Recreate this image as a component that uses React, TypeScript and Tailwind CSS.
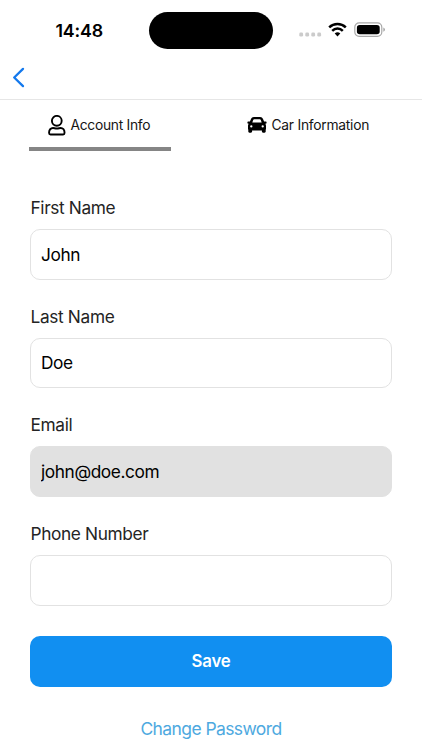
import { useState } from 'react'

type Field = { label: string; value: string; spacing: string; readOnly?: boolean }

const FIELDS: Field[] = [
  { label: 'First Name',   value: 'John',         spacing: 'tracking-[-0.37px]' },
  { label: 'Last Name',    value: 'Doe',          spacing: 'tracking-[-0.35px]' },
  { label: 'Email',        value: 'john@doe.com', spacing: 'tracking-[-0.35px]', readOnly: true },
  { label: 'Phone Number', value: '',             spacing: 'tracking-[-0.37px]' },
]

function UserIcon() {
  return (
    <svg className="shrink-0" width="18" height="21" viewBox="0 0 18 21" fill="none" stroke="#000" strokeWidth="1.9">
      <circle cx="8.8" cy="5.8" r="4.9" />
      <path d="M1.1 18v-.7c0-2.4 1.6-4.3 3.9-4.3 1.3 0 2 .5 3.8.5s2.5-.5 3.8-.5c2.3 0 3.9 1.900 3.900 4.300v.7c0 .9-.6 1.500-1.400 1.500H2.500c-.8 0-1.400-.6-1.400-1.500z" />
    </svg>
  )
}

function CarIcon() {
  return (
    <svg className="shrink-0" width="20" height="16" viewBox="0 0 20 16">
      <path d="M6.900 0h6.200c1.400 0 2.400.8 2.900 2l1.100 2.600h1.700c.6 0 .9.4.8.9l-.2.700c-.1.4-.4.600-.9.600h-.4c.6.500.9 1.100.9 1.900v3c0 .4-.1.800-.3 1.100v1.800c0 .600-.5 1.100-1.100 1.100H16c-.6 0-1.100-.5-1.100-1.100v-1.200h-9.800v1.200c0 .600-.5 1.100-1.100 1.100H2.400c-.6 0-1.100-.5-1.100-1.100v-1.800c-.2-.3-.3-.7-.3-1.100v-3c0-.8.3-1.400.9-1.900h-.4c-.5 0-.8-.2-.9-.6l-.2-.7c-.1-.5.2-.9.8-.9h1.700L4 2C4.500.8 5.500 0 6.900 0z" />
      <path d="M7.200 2.300h5.600c.5 0 .8.200 1 .7l.9 2.400H5.300L6.200 3c.2-.5.500-.7 1-.7z" fill="#fff" />
      <circle cx="4.300" cy="9.400" r="1.150" fill="#fff" />
      <circle cx="15.700" cy="9.400" r="1.150" fill="#fff" />
    </svg>
  )
}

function StatusBar() {
  return (
    <div className="flex h-[60px] items-start">
      <div className="w-[149px] pt-[19px] pl-[55.5px] text-[17.8px] leading-6 font-semibold tracking-[-0.15px] text-black">14:48</div>
      <div className="mt-[12px] h-[37px] w-[124px] rounded-full bg-black" />

      {/* Signal, wifi, battery */}
      <div className="flex pt-[22px] pl-[26px]">
        <svg className="mt-[10px]" width="23" height="5" viewBox="0 0 23 5" fill="#cbcbcb">
          <rect x="0.3" y="0.6" width="3.8" height="4" rx="1.4" />
          <rect x="6.3" y="0.6" width="3.8" height="4" rx="1.4" />
          <rect x="12.3" y="0.6" width="3.8" height="4" rx="1.4" />
          <rect x="18.3" y="0.6" width="3.8" height="4" rx="1.4" />
        </svg>
        <svg className="ml-[6px]" width="20" height="15" viewBox="0 0 20 15" fill="none" stroke="#000" strokeWidth="2.5">
          <path d="M1.2 5.3a12.200 12.200 0 0 1 16.600 0" />
          <path d="M4.200 8.800a7.500 7.500 0 0 1 10.600 0" />
          <path d="M9.500 14.400 6.700 11.500a4.200 4.200 0 0 1 5.600 0z" fill="#000" stroke="none" />
        </svg>
        <svg className="ml-[6px]" width="32" height="16" viewBox="0 0 32 16">
          <rect x="0.8" y="0.8" width="27" height="13.6" rx="4.4" fill="none" stroke="#a8a8a8" strokeWidth="1.2" />
          <rect x="2.9" y="2.9" width="22.8" height="9.4" rx="2.8" fill="#000" />
          <path d="M29.3 5.4c1.200.5 1.700 1.200 1.700 2.200s-.5 1.700-1.700 2.200z" fill="#a8a8a8" />
        </svg>
      </div>
    </div>
  )
}

function FormField({ field }: { field: Field }) {
  const [value, setValue] = useState(field.value)

  return (
    <label className="flex flex-col gap-[9px]">
      <span className={`pl-[0.5px] text-[17.3px] leading-6 text-[#242424] ${field.spacing}`}>{field.label}</span>
      <input
        value={value}
        readOnly={field.readOnly}
        onChange={(e) => setValue(e.target.value)}
        className={`h-[50.67px] w-full rounded-[10px] border px-[10px] text-[17.3px] tracking-[-0.4px] text-black outline-none ${
          field.readOnly ? 'border-[#e1e1e1] bg-[#e1e1e1]' : 'border-[#e2e2e2] bg-white'
        }`}
      />
    </label>
  )
}

export default function App() {
  return (
    <div className="flex h-[750px] w-[422px] flex-col overflow-hidden bg-white font-['Inter','Liberation_Sans',sans-serif]">
      <StatusBar />

      {/* Nav bar */}
      <div className="flex h-[40px] items-start border-b border-[#e6e6e6] pt-[7px] pl-[12px]">
        <button aria-label="Back">
          <svg width="13" height="21" viewBox="0 0 13 21" fill="none" stroke="#1479ed" strokeWidth="2.3" strokeLinecap="round" strokeLinejoin="round">
            <path d="M11 1.9 2.2 10.5 11 19.1" />
          </svg>
        </button>
      </div>

      {/* Tabs */}
      <div className="flex h-[51px] px-[28.5px] text-[13.8px] text-[#151515]">
        <button className="flex w-[142px] items-center justify-start border-b-4 border-[#858585] pt-[3px] pl-[19.5px]">
          <UserIcon />
          <span className="mt-px ml-[4.5px] whitespace-nowrap tracking-[-0.28px]">Account Info</span>
        </button>
        <button className="ml-[47px] flex w-[175px] items-center justify-start border-b-4 border-transparent pt-[3px] pl-[29.5px]">
          <CarIcon />
          <span className="mt-px ml-[4.5px] whitespace-nowrap tracking-[-0.24px]">Car Information</span>
        </button>
      </div>

      <form className="flex flex-col px-[30px] pt-[45px]" onSubmit={(e) => e.preventDefault()}>
        <div className="flex flex-col gap-[25px]">
          {FIELDS.map((f) => <FormField key={f.label} field={f} />)}
        </div>

        <button type="submit" className="mt-[30.5px] h-[50.67px] rounded-[10px] bg-[#118ff1] pt-px text-[16.8px] font-semibold tracking-[-0.2px] text-white">
          Save
        </button>
        <button type="button" className="mt-[30px] self-center text-[17.5px] leading-6 tracking-[-0.6px] text-[#4ea9e0]">
          Change Password
        </button>
      </form>
    </div>
  )
}
